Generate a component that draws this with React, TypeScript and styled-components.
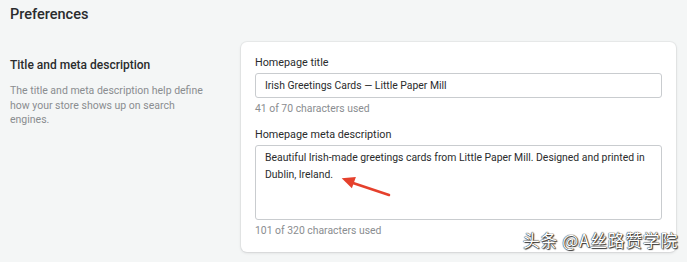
import React from "react";
import styled, { createGlobalStyle } from "styled-components";

const Global = createGlobalStyle`
  html, body { margin: 0; padding: 0; background: #f4f6f6; }
  body { font-family: Roboto, "Noto Sans", sans-serif; color: #202223; -webkit-font-smoothing: antialiased; }
`;

const Page = styled.div`
  width: 687px;
  height: 262px;
  position: relative;
  overflow: hidden;
  box-sizing: border-box;
  padding: 6px 11px 0 10px;
`;

const PageTitle = styled.h1`
  margin: 0;
  font-size: 14.5px;
  line-height: 18px;
  font-weight: 500;
  color: #2a2c2d;
`;

const Section = styled.div`
  display: grid;
  grid-template-columns: 231px 435px;
  margin-top: 18px;
`;

const Aside = styled.div`
  padding-top: 15px;
  padding-right: 31px;
`;

const AsideTitle = styled.h2`
  margin: 0;
  font-size: 12px;
  line-height: 16px;
  font-weight: 500;
  color: #2a2c2d;
`;

const AsideText = styled.p`
  margin: 11px 0 0;
  font-size: 10.5px;
  line-height: 14.5px;
  color: #8a8d90;
`;

const Card = styled.div`
  background: #fff;
  border-radius: 6px;
  box-shadow: 0 0 0 1px rgba(63, 63, 68, 0.05), 0 1px 3px rgba(63, 63, 68, 0.15);
  padding: 14px 14px 14px 14px;
  height: 210px;
  box-sizing: border-box;
`;

const Field = styled.div<{ $gap?: number }>`
  display: flex;
  flex-direction: column;
  margin-top: ${(p) => p.$gap ?? 0}px;
`;

const Label = styled.label`
  font-size: 10.8px;
  line-height: 14px;
  color: #2a2c2d;
  margin-bottom: 3px;
`;

const Input = styled.div`
  height: 25px;
  box-sizing: border-box;
  border: 1px solid #c9cccf;
  border-radius: 3px;
  padding: 0 9px;
  display: flex;
  align-items: center;
  font-size: 10.4px;
  color: #2a2c2d;
`;

const TextArea = styled.div`
  height: 75px;
  box-sizing: border-box;
  border: 1px solid #c9cccf;
  border-radius: 3px;
  padding: 4px 9px;
  font-size: 10.4px;
  line-height: 16.5px;
  color: #2a2c2d;
  position: relative;
`;

const Help = styled.div`
  font-size: 10.4px;
  line-height: 14px;
  color: #8a8d90;
  margin-top: 4px;
`;

const Arrow = styled.svg`
  position: absolute;
  left: 84px;
  top: 29px;
`;

const Watermark = styled.div`
  position: absolute;
  right: 9px;
  bottom: 12px;
  font-family: "Noto Sans CJK SC", sans-serif;
  font-size: 17px;
  line-height: 20px;
  letter-spacing: 0.6px;
  color: #fff;
  text-shadow: 0 0 1px #222, 0 0 1px #222, 1px 1px 1px #333;
`;

export default function App() {
  return (
    <Page>
      <Global />
      <PageTitle>Preferences</PageTitle>
      <Section>
        <Aside>
          <AsideTitle>Title and meta description</AsideTitle>
          <AsideText>
            The title and meta description help define how your store shows up on search engines.
          </AsideText>
        </Aside>
        <Card>
          <Field>
            <Label>Homepage title</Label>
            <Input>Irish Greetings Cards — Little Paper Mill</Input>
            <Help>41 of 70 characters used</Help>
          </Field>
          <Field $gap={12}>
            <Label>Homepage meta description</Label>
            <TextArea>
              Beautiful Irish-made greetings cards from Little Paper Mill. Designed and printed in Dublin, Ireland.
              <Arrow width="52" height="24" viewBox="0 0 52 24">
                <line x1="49" y1="20" x2="10" y2="7" stroke="#e5402c" strokeWidth="2.5" strokeLinecap="round" />
                <polygon points="1.7,3.3 15.9,2.1 11.9,13.3" fill="#e5402c" />
              </Arrow>
            </TextArea>
            <Help>101 of 320 characters used</Help>
          </Field>
        </Card>
      </Section>
      <Watermark>头条 @A丝路赞学院</Watermark>
    </Page>
  );
}
